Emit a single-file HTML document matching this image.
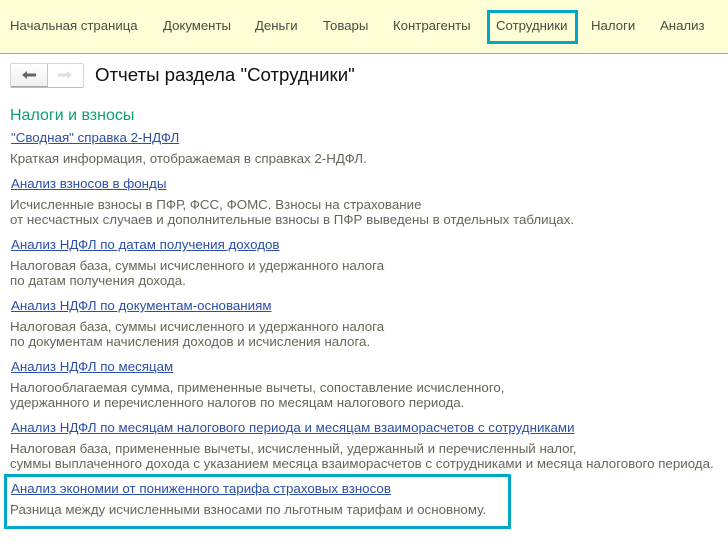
<!DOCTYPE html>
<html lang="ru"><head><meta charset="utf-8">
<style>
html,body{margin:0;padding:0;background:#fff}
body{width:728px;height:548px;position:relative;overflow:hidden;font-family:"Liberation Sans","Noto Sans CJK SC",sans-serif}
.t{position:absolute;white-space:nowrap;font-size:13.33px;line-height:16px;height:16px}
.n{color:#4a4a40;top:18px;font-size:13.2px}
.l{color:#2a4fa8;text-decoration:underline}
.d{color:#666658}
.box{position:absolute;box-sizing:border-box;border:3px solid #00a7c8}
</style></head><body>
<div style="position:absolute;left:0;top:0;width:728px;height:54px;box-sizing:border-box;background:#ffffd7;border-bottom:1px solid #a3a38a"></div>
<div class="t n" style="left:10px">Начальная страница</div>
<div class="t n" style="left:163px">Документы</div>
<div class="t n" style="left:255px">Деньги</div>
<div class="t n" style="left:323px">Товары</div>
<div class="t n" style="left:393px">Контрагенты</div>
<div class="box" style="left:487px;top:10px;width:91px;height:34px"></div>
<div class="t n" style="left:496px">Сотрудники</div>
<div class="t n" style="left:591px">Налоги</div>
<div class="t n" style="left:660px">Анализ</div>

<div style="position:absolute;left:10px;top:63px;width:74px;height:25px;box-sizing:border-box;border:1px solid #d6d6d6;border-bottom-color:#bdbdbd;border-radius:2px;background:#fff"></div>
<div style="position:absolute;left:11px;top:64px;width:37px;height:23px;box-sizing:border-box;border-right:1px solid #c4c4c4;border-bottom:1px solid #a8a8a8;background:linear-gradient(#fff,#efefef)"></div>
<svg style="position:absolute;left:20px;top:68px" width="60" height="16" viewBox="0 0 60 16">
<path d="M2 7 L7 3 V5.5 H16 V8.5 H7 V11 Z" fill="#666"/>
<path d="M52 7 L47 3 V5.5 H38 V8.5 H47 V11 Z" fill="#ddd"/>
</svg>
<div class="t" style="left:95px;top:63px;font-size:18.67px;line-height:24px;height:24px;color:#111">Отчеты раздела "Сотрудники"</div>

<div class="t" style="left:10px;top:107px;font-size:16px;line-height:18px;height:18px;color:#0e9f6e">Налоги и взносы</div>

<div class="t l" style="left:11px;top:130px">"Сводная" справка 2-НДФЛ</div>
<div class="t d" style="left:10px;top:151px">Краткая информация, отображаемая в справках 2-НДФЛ.</div>

<div class="t l" style="left:11px;top:176px">Анализ взносов в фонды</div>
<div class="t d" style="left:10px;top:197px">Исчисленные взносы в ПФР, ФСС, ФОМС. Взносы на страхование</div>
<div class="t d" style="left:10px;top:212px">от несчастных случаев и дополнительные взносы в ПФР выведены в отдельных таблицах.</div>

<div class="t l" style="left:11px;top:237px">Анализ НДФЛ по датам получения доходов</div>
<div class="t d" style="left:10px;top:258px">Налоговая база, суммы исчисленного и удержанного налога</div>
<div class="t d" style="left:10px;top:273px">по датам получения дохода.</div>

<div class="t l" style="left:11px;top:298px">Анализ НДФЛ по документам-основаниям</div>
<div class="t d" style="left:10px;top:319px">Налоговая база, суммы исчисленного и удержанного налога</div>
<div class="t d" style="left:10px;top:334px">по документам начисления доходов и исчисления налога.</div>

<div class="t l" style="left:11px;top:359px">Анализ НДФЛ по месяцам</div>
<div class="t d" style="left:10px;top:380px">Налогооблагаемая сумма, примененные вычеты, сопоставление исчисленного,</div>
<div class="t d" style="left:10px;top:395px">удержанного и перечисленного налогов по месяцам налогового периода.</div>

<div class="t l" style="left:11px;top:420px">Анализ НДФЛ по месяцам налогового периода и месяцам взаиморасчетов с сотрудниками</div>
<div class="t d" style="left:10px;top:441px">Налоговая база, примененные вычеты, исчисленный, удержанный и перечисленный налог,</div>
<div class="t d" style="left:10px;top:456px">суммы выплаченного дохода с указанием месяца взаиморасчетов с сотрудниками и месяца налогового периода.</div>

<div class="box" style="left:4px;top:474px;width:507px;height:55px"></div>
<div class="t l" style="left:11px;top:481px">Анализ экономии от пониженного тарифа страховых взносов</div>
<div class="t d" style="left:10px;top:502px">Разница между исчисленными взносами по льготным тарифам и основному.</div>
</body></html>
